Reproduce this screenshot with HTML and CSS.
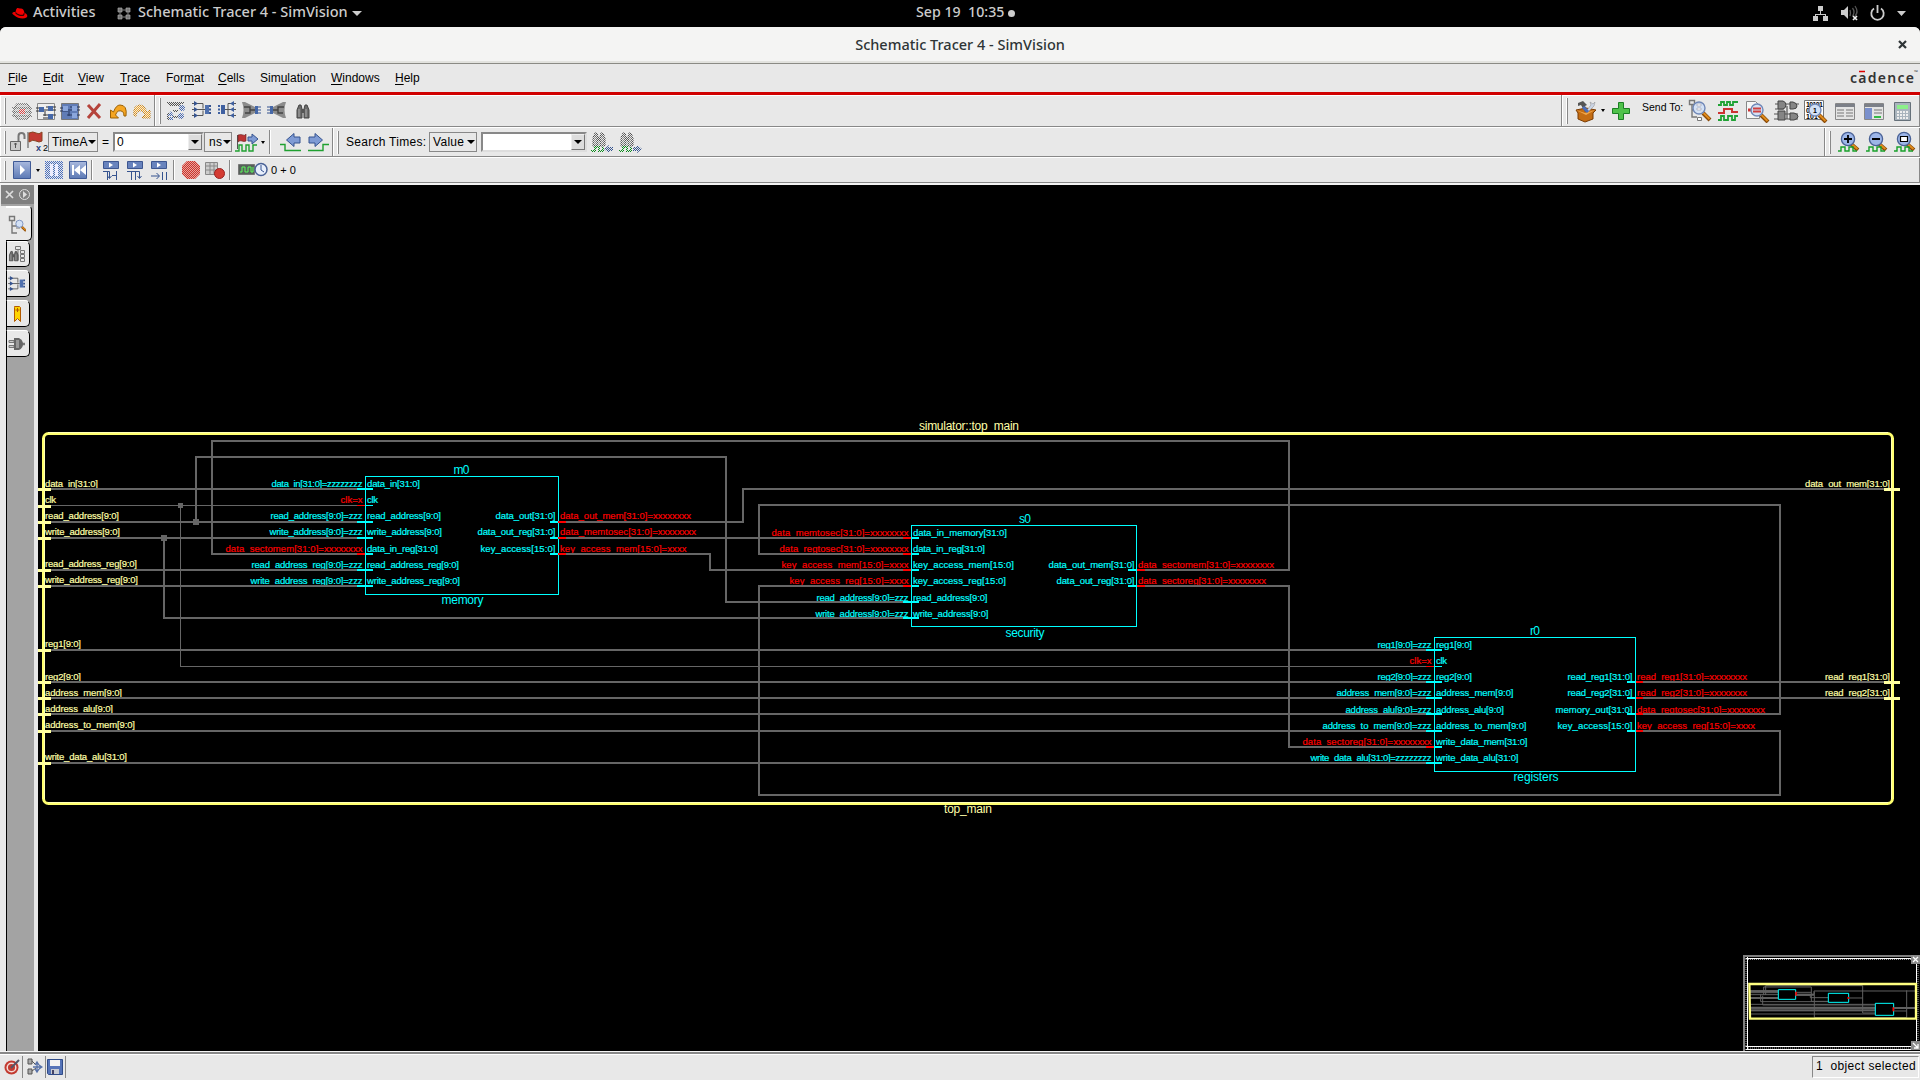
FILE: index.html
```html
<!DOCTYPE html>
<html lang="en">
<head>
<meta charset="utf-8">
<title>Schematic Tracer 4 - SimVision</title>
<link rel="stylesheet" href="styles.css">
</head>
<body>
<svg class="defs" width="0" height="0">
  <defs>
    <pattern id="checks" width="2" height="2" patternUnits="userSpaceOnUse"><path d="M0 0h1v1H0zM1 1h1v1H1z" fill="#fff"/></pattern>
    <mask id="dither" maskUnits="userSpaceOnUse" x="0" y="0" width="30" height="30"><rect width="30" height="30" fill="url(#checks)"/></mask>
    <linearGradient id="blue" x2="0" y2="1"><stop stop-color="#a9b9de"/><stop offset="1" stop-color="#5d7ab5"/></linearGradient>
    <g id="lens"><path d="M13 13l7 7" stroke="#8a4a08" stroke-width="4"/><path d="M13.5 13l6 6" stroke="#e08c1c" stroke-width="2"/><circle cx="9" cy="8" r="6" fill="#d3e1f5" stroke="#7088b8" stroke-width="1.4"/></g>
    <g id="zoomlens"><path d="M14 13l7 6" stroke="#8a4a08" stroke-width="4"/><path d="M14.5 13l6 5" stroke="#e08c1c" stroke-width="2"/><path d="M1 20h3v-4h4v4h4v-4h4v4h4" fill="none" stroke="#17a02a" stroke-width="1.4"/><circle cx="11" cy="8" r="6.6" fill="#9db6e8" stroke="#4a6296" stroke-width="1.3"/></g>
    <g id="binoc"><path d="M2 7l2-5h2l1 4v9H2zM9 6l1-4h2l2 5v8H9z" fill="#6c6c6c" stroke="#444" stroke-width="1"/><path d="M7 6h2v4H7z" fill="#555"/><path d="M4 6v8M11 6v8" stroke="#aaa"/></g>
    <g id="step"><path d="M1.500.500h15v7h-15z" fill="#6883bd" stroke="#3d5690"/><path d="M7 1.500v5L11 4z" fill="#fff"/></g>
    <g id="connect"><path d="M0 2.500h11v5M0 8.500h13M0 14.500h11v-5" fill="none" stroke="#555"/><path d="M2 0l4 2.500L2 5zM2 6l4 2.500L2 11zM2 12l4 2.500L2 17z" fill="#35538f"/><path d="M13 4h4v9h-4z" fill="#4f70ae"/><path d="M17 4h2v2h-2zM17 7.500h2v2h-2zM17 11h2v2h-2z" fill="#35538f"/></g>
    <g id="tree"><path d="M.500.500h5v4h-5zM3 5v12h5M3 10h5" fill="none" stroke="#777" stroke-width="1.400"/></g>
  </defs>
</svg>

<header class="topbar">
  <svg class="hat" width="16" height="13" viewBox="0 0 16 13"><path d="M4 3c1-3 2-2 4-1.500 2-.5 4 .5 4.500 4.500 3 1 3.500 3.500 2 4.500-3 2-9 1-12-2C-1 6.500 0 5 3.500 5z" fill="#e00"/><path d="M3.500 5.500c1 2 5 3.500 8 2.700l.8-2" fill="none" stroke="#300" stroke-width="1.200"/></svg>
  <span class="activities">Activities</span>
  <svg class="appicon" width="15" height="13" viewBox="0 0 15 13"><path d="M1 1h4v4H1zM9 1h4v4H9zM1 8h4v4H1zM9 8h4v4H9z" fill="#777" stroke="#aaa" stroke-width=".7"/><path d="M5 3h4M5 10h4M3 5v3M11 5v3" stroke="#888"/></svg>
  <span class="appname">Schematic Tracer 4 - SimVision</span>
  <svg class="topcaret" width="10" height="5"><path d="M0 0h10L5 5z" fill="#ccc"/></svg>
  <span class="clock">Sep 19&nbsp; 10:35</span><i class="dot"></i>
  <svg class="tray" width="94" height="16" viewBox="0 0 94 16">
    <g fill="#ccc"><path d="M5 1h5v5H5zM0 11h5v5H0zM10 11h5v5h-5z"/><path d="M7 6h1v3h5v2h-1v-1H3v1H2V9h5z"/><path d="M28 5h3l4-4v13l-4-4h-3zM84 6h9l-4.500 5z"/></g>
    <path d="M37 5q1 3 0 6M39.500 3q3 4 0 8M42 1q4 6 0 10" fill="none" stroke="#555" stroke-width="1.300"/><path d="M40 11l4 4M44 11l-4 4" stroke="#eee" stroke-width="1.700"/>
    <path d="M61 3.500a6.200 6.200 0 1 0 7 0M64.500 0v8" fill="none" stroke="#ccc" stroke-width="1.800"/>
  </svg>
</header>

<main class="window">
  <div class="titlebar"><span class="title">Schematic Tracer 4 - SimVision</span>
    <svg class="close" width="9" height="9"><path d="M1 1l7 7M8 1L1 8" stroke="#2e3436" stroke-width="2.200"/></svg></div>

  <nav class="menubar">
    <div class="menus"><span><u>F</u>ile</span><span><u>E</u>dit</span><span><u>V</u>iew</span><span><u>T</u>race</span><span>For<u>m</u>at</span><span><u>C</u>ells</span><span>Sim<u>u</u>lation</span><span><u>W</u>indows</span><span><u>H</u>elp</span></div>
    <svg class="brand" width="70" height="20"><text x="0" y="15" textLength="64">cadence</text><path d="M9 3.500h6" stroke="#d00" stroke-width="1.500"/><text class="tm" x="64" y="6">™</text></svg>
  </nav>

  <div class="toolbar row1">
    <div class="group g-edit"><i class="handle"></i>
      <svg class="btn" viewBox="0 0 24 24"><g mask="url(#dither)"><path d="M7 5h10l3 4v7l-3 4H7l-3-4V9zM2 9h20M2 13h20M2 17h20" fill="#bbb" stroke="#666" stroke-width="1.500"/><path d="M9 10h6v5H9z" fill="#d44"/></g></svg>
      <svg class="btn" viewBox="0 0 24 24"><path d="M3.500 4.500h17v16h-17z" fill="#eee" stroke="#888"/><path d="M2 9h8M2 12h8M12 8h10M12 11h10M9 16h13M9 19h5M11 10v7" stroke="#333" fill="none"/><path d="M5 8h5v5H5zM14 7h5v5h-5zM14 15h5v5h-5z" fill="#4668a8"/></svg>
      <svg class="btn" viewBox="0 0 24 24"><path d="M3.500 4.500h17v16h-17z" fill="#607cb6" stroke="#777"/><path d="M2 9h8M2 12h8M12 8h10M12 11h10M9 16h13M11 10v7" stroke="#26375e" fill="none"/><path d="M5 7h5v5H5zM14 7h5v5h-5zM14 14h5v5h-5z" fill="#8aa6dc"/></svg>
      <svg class="btn" viewBox="0 0 24 24"><path d="M6 6l12 13M18 5L6 19" stroke="#b5443c" stroke-width="3"/></svg>
      <svg class="btn" viewBox="0 0 24 24"><path d="M4.500 11v8h8l-3-3q2-6 7-3.500 1.500 1 1.500 4.500h2q1.500-11-6-11-4 0-6.500 7z" fill="#f5a623" stroke="#9c6206"/></svg>
      <svg class="btn" viewBox="0 0 24 24"><g mask="url(#dither)"><path d="M20 11v8h-8l3-3q-2-6-7-3.500Q6 13 6 17H4Q2.500 6 10 6q4 0 7 7z" fill="#f5a623" stroke="#c07808"/></g></svg>
    </div>
    <div class="group g-trace"><i class="handle"></i>
      <svg class="btn wide" viewBox="0 0 25 24"><g mask="url(#dither)"><path d="M3 4h17M5 6h12M4 14v7M9 12h5M9 18h5" stroke="#222" stroke-width="1.500"/><circle cx="18" cy="9" r="3" fill="#4466b0"/><circle cx="17" cy="17" r="3" fill="#4466b0"/><path d="M3 17l4-5 3 5zM5 18h4v3H5z" fill="#4466b0"/></g></svg>
      <svg class="btn wide" viewBox="0 0 25 24"><use href="#connect" x="3" y="2"/></svg>
      <svg class="btn wide" viewBox="0 0 25 24"><path d="M22 4.500h-8v12h8M9 10.500h13" fill="none" stroke="#555"/><path d="M20 2l-4 2.500L20 7zM20 8l-4 2.500 4 2.500zM20 14l-4 2.500 4 2.500zM7 6h4v9H7zM4 6h2v2H4zM4 9.500h2v2H4zM4 13h2v2H4z" fill="#3f60a0"/></svg>
      <svg class="btn wide" viewBox="0 0 25 24"><path d="M3 3h3l10 5v6L6 19H3q3-8 0-16z" fill="#8c8c8c"/><path d="M5 8h6v3h7M6 14h5v-3" fill="none" stroke="#444" stroke-width="1.400"/><path d="M16 7h3v8h-3z" fill="#4668a8"/><path d="M19 8h3M19 11h3M19 14h3" stroke="#35538f"/></svg>
      <svg class="btn wide" viewBox="0 0 25 24"><path d="M22 3h-3L9 8v6l10 5h3q-3-8 0-16z" fill="#8c8c8c"/><path d="M20 8h-6v3H7M19 14h-5v-3" fill="none" stroke="#444" stroke-width="1.400"/><path d="M6 7h3v8H6z" fill="#4668a8"/><path d="M3 8h3M3 11h3M3 14h3" stroke="#35538f"/></svg>
      <svg class="btn wide" viewBox="0 0 25 24"><use href="#binoc" x="6" y="4"/></svg>
    </div>
    <div class="group g-send"><i class="handle"></i>
      <svg class="btn" viewBox="0 0 24 24"><path d="M2 11l10-2 10 2-3 3v6l-8 3-7-3v-6z" fill="#c46d14" stroke="#7b3d05"/><path d="M2 11l9 3 10-3-9 5z" fill="#f0a64a"/><path d="M4 4l5-2 4 4-2 1 3 5-3 1-4-7-3 1z" fill="#555"/><path d="M12 12l5-6-1-3 3 2 2-2-1 4-6 6z" fill="#ccd5e5" stroke="#888" stroke-width=".5"/><path d="M9 8l5 5" stroke="#4d6fbb" stroke-width="3"/></svg>
      <i class="caret"></i>
      <svg class="btn plus" viewBox="0 0 24 24"><path d="M9.500 3.500h5v6h6v5h-6v6h-5v-6h-6v-5h6z" fill="#4fc24b" stroke="#1b7f24"/></svg>
      <span class="sendto">Send To:</span>
      <svg class="btn send first" viewBox="0 0 29 24"><use href="#tree" x="4" y="1"/><path d="M12.500 18.500h4v3h-4z" fill="#fff" stroke="#777"/><use href="#lens" x="5" y="1"/><path d="M12 5h4v2h-4zM12 9h4v2h-4z" fill="#fff" stroke="#99a" stroke-width=".6"/></svg>
      <svg class="btn send" viewBox="0 0 29 24"><path d="M4 6h3V3h3v3h3V3h3v3h3V3h5M4 21h3v-4h3v4h4v-4h4v4h3v-4h3" fill="none" stroke="#21a336" stroke-width="1.800"/><path d="M4 14h6v-4h8v3h6" fill="none" stroke="#c33" stroke-width="2"/></svg>
      <svg class="btn send" viewBox="0 0 29 24"><path d="M3.500 2.500h9l4 4v13h-13z" fill="#f6f6f6" stroke="#888"/><path d="M5 11h9" stroke="#c33" stroke-width="3"/><use href="#lens" x="5" y="3"/><path d="M10 9.500h8M10 12.500h8" stroke="#d04040" stroke-width="2"/></svg>
      <svg class="btn send" viewBox="0 0 29 24"><path d="M3 5h24M3 10h9M2 15h24M2 20h24M15 7v13" stroke="#555" stroke-width="1.200"/><path d="M6 2h5q3 1 3 4t-3 4H6zM18 3h3q4 1 4 4t-4 3h-3zM6 12h7v9H6zM18 14h4q4 1 4 3.500t-4 3.500h-4z" fill="#858585" stroke="#444"/></svg>
      <svg class="btn send" viewBox="0 0 29 24"><path d="M3.500 1.500h19v19h-19z" fill="#fff" stroke="#777"/><text class="bits" x="5" y="8" textLength="17">10101</text><text class="bits" x="5" y="14">0</text><text class="bits" x="5" y="20" textLength="12">101</text><use href="#lens" x="5" y="3"/><text class="bits" x="12" y="14">1</text></svg>
      <svg class="btn send" viewBox="0 0 29 24"><path d="M5.500 4.500h19v16h-19z" fill="#e4e4e4" stroke="#888"/><path d="M5 5h20v3H5z" fill="#7c8088"/><path d="M7 11h7M7 14h7M7 17h7M16 11h7M16 14h7M16 17h7" stroke="#777"/></svg>
      <svg class="btn send" viewBox="0 0 29 24"><path d="M5.500 4.500h19v16h-19z" fill="#e4e4e4" stroke="#888"/><path d="M5 5h20v3H5z" fill="#7c8088"/><path d="M6 9h7v11H6z" fill="#7a90cc"/><path d="M15 11h8M15 14h8" stroke="#777"/><path d="M15 18h7" stroke="#3b4" stroke-width="2"/></svg>
      <svg class="btn send" viewBox="0 0 29 24"><path d="M6.500 3.500h16v18h-16z" fill="#a9b4bd" stroke="#66717a"/><path d="M9 6h11v4H9z" fill="#8cf08a"/><path d="M9 13h11M9 16h11M9 19h11" stroke="#eee" stroke-width="2" stroke-dasharray="2 1"/></svg>
    </div>
  </div>

  <div class="toolbar row2">
    <div class="group g-time"><i class="handle"></i>
      <svg class="lockflag" width="38" height="24" viewBox="0 0 38 24"><path d="M.500 11.500h10v9h-10z" fill="#ccc" stroke="#666"/><path d="M8.500 11V6q0-3 3-3t3 3v3" fill="none" stroke="#777" stroke-width="2"/><path d="M5.500 13v5M4 14h3" stroke="#555"/><path d="M18 2v16" stroke="#999" stroke-width="2"/><path d="M19 3q4-2 7 0t6-1v9q-3 2-6 0t-7 1z" fill="#c23a33" stroke="#842"/><text class="xmark" x="26" y="21">x</text><text class="two" x="33" y="21">2</text></svg>
      <span class="select timea">TimeA<i class="caret"></i></span><span class="eq">=</span>
      <span class="entry timeval">0<b><i class="caret"></i></b></span><span class="select unit">ns<i class="caret"></i></span>
      <svg class="flagwave" width="24" height="24" viewBox="0 0 24 24"><path d="M2.500 5v14" stroke="#555"/><path d="M3 5q3-1 5 0t3-1v7q-2 1-4 0t-4 1z" fill="#b33" stroke="#622" stroke-width=".6"/><path d="M13 7h4V4l6 5-6 5v-3h-4z" fill="#7f9bd4" stroke="#35538f"/><path d="M0 21h4v-6h3v6h4v-6h3v6h4v-6h4" fill="none" stroke="#1fa030" stroke-width="1.400"/></svg>
      <i class="caret c2"></i><i class="sep"></i>
      <svg class="arrow left" width="21" height="20" viewBox="0 0 21 20"><path d="M0 12.500h5v6h16" fill="none" stroke="#1fa030" stroke-width="1.400"/><path d="M20 5h-6V1.500L6.500 8l7.500 6.500V11h6z" fill="#7f9bd4" stroke="#35538f"/></svg>
      <svg class="arrow" width="21" height="20" viewBox="0 0 21 20"><path d="M0 18.500h15v-6h6" fill="none" stroke="#1fa030" stroke-width="1.400"/><path d="M1 5h6V1.500L14.500 8 7 14.500V11H1z" fill="#7f9bd4" stroke="#35538f"/></svg>
    </div>
    <div class="group g-search"><i class="handle"></i>
      <span class="searchlabel">Search Times:</span><span class="select value">Value<i class="caret"></i></span>
      <span class="entry find"><b><i class="caret"></i></b></span>
      <svg class="finder" width="24" height="24" viewBox="0 0 24 24"><g mask="url(#dither)"><use href="#binoc" y="1"/><path d="M0 21h4v-4h4v4h4v-4" fill="none" stroke="#0a8a1a" stroke-width="2"/><path d="M13 19l5-4v8z" fill="#35538f"/><path d="M18 17h4v4h-4z" fill="#35538f"/></g></svg>
      <svg class="finder" width="24" height="24" viewBox="0 0 24 24"><g mask="url(#dither)"><use href="#binoc" y="1"/><path d="M0 21h4v-4h4v4h4v-4" fill="none" stroke="#0a8a1a" stroke-width="2"/><path d="M23 19l-5-4v8z" fill="#35538f"/><path d="M14 17h4v4h-4z" fill="#35538f"/></g></svg>
    </div>
    <div class="group g-zoom"><i class="handle"></i>
      <svg class="zoom" width="28" height="22" viewBox="0 0 28 22"><use href="#zoomlens" x="2"/><path d="M9 8h8M13 4v8" stroke="#000" stroke-width="1.800"/></svg>
      <svg class="zoom" width="28" height="22" viewBox="0 0 28 22"><use href="#zoomlens" x="2"/><path d="M9 8h8" stroke="#000" stroke-width="2"/></svg>
      <svg class="zoom" width="28" height="22" viewBox="0 0 28 22"><use href="#zoomlens" x="2"/><path d="M9.500 5.500h7v5h-7z" fill="#fff" stroke="#000" stroke-width="1.200"/></svg>
    </div>
  </div>

  <div class="toolbar row3">
    <div class="group g-run"><i class="handle"></i>
      <svg class="btn" viewBox="0 0 24 24"><path d="M3.500 3.500h17v17h-17z" fill="url(#blue)" stroke="#3f5a96"/><path d="M10 7v10l5-5z" fill="#fff"/></svg>
      <i class="caret run"></i>
      <svg class="btn" viewBox="0 0 24 24"><g mask="url(#dither)"><path d="M3 3h18v18H3z" fill="#4a6fc0"/></g><path d="M8 6h3v12H8zM13 6h3v12h-3z" fill="#eef"/></svg>
      <svg class="btn" viewBox="0 0 24 24"><path d="M3.500 3.500h17v17h-17z" fill="url(#blue)" stroke="#3f5a96"/><path d="M6 7h2v10H6zM14 7v10l-6-5zM20 7v10l-6-5z" fill="#fff"/></svg>
      <i class="sep s1"></i>
      <svg class="btn s2" viewBox="0 0 24 24"><use href="#step" x="3" y="3"/><path d="M4 13.500h6.500V20M8.500 18l2 2.500 2-2.500M8.500 14v8M17.500 13v9M17 17.500h-4" fill="none" stroke="#35538f"/></svg>
      <svg class="btn" viewBox="0 0 24 24"><use href="#step" x="3" y="3"/><path d="M4 13.500h12.500V20M14.500 18l2 2.500 2-2.500M8.500 14v8M12.500 14v8" fill="none" stroke="#35538f"/></svg>
      <svg class="btn" viewBox="0 0 24 24"><use href="#step" x="3" y="3"/><path d="M4 18h8M9.500 15l3 3-3 3M15.500 14v8M19.500 14v8" fill="none" stroke="#35538f"/></svg>
      <i class="sep s3"></i>
      <svg class="btn s4" viewBox="0 0 24 24"><path d="M8 3h8l5 5v8l-5 5H8l-5-5V8z" fill="#e9a29d"/><g mask="url(#dither)"><path d="M8 3h8l5 5v8l-5 5H8l-5-5V8z" fill="#c9352b"/></g></svg>
      <svg class="btn" viewBox="0 0 24 24"><path d="M2.500 4.500h12v12h-12zM2 8h13M2 12h13M7 5v12M11 5v12" fill="#ccc" stroke="#888"/><circle cx="16.500" cy="15.500" r="5" fill="#d43c33" stroke="#922"/></svg>
      <i class="sep s5"></i>
      <svg class="simtime" width="30" height="16" viewBox="0 0 30 16"><path d="M.500 2.500h16v10H.500z" fill="#57605a" stroke="#777"/><path d="M2 10h2V5h3v5h3V5h3v5h2V5" fill="none" stroke="#5dfa5d"/><circle cx="23" cy="7.500" r="6" fill="#e8effc" stroke="#4a6296" stroke-width="1.500"/><path d="M23 3v5l3 2" fill="none" stroke="#35538f"/></svg>
      <span class="delta">0 + 0</span>
    </div>
  </div>

  <section class="workspace">
    <aside class="sidebar">
      <div class="sidehead"><svg width="33" height="19"><path d="M5 6l7 7M12 6l-7 7" stroke="#ddd" stroke-width="1.700"/><circle cx="23.500" cy="9.500" r="5" fill="none" stroke="#ddd"/><path d="M22 6v7l4-3.500z" fill="#ddd"/></svg></div>
      <div class="tabs">
        <div class="tab active"><svg width="18" height="20" viewBox="0 0 18 20"><use href="#tree" x="1" y="2"/><path d="M8 8h4M8 14h4" stroke="#777"/><g transform="translate(6 5) scale(.6)"><use href="#lens"/></g></svg></div>
        <div class="tab second"><svg width="18" height="18" viewBox="0 0 18 18"><path d="M7.500 1.500h5v3h-5zM12.500 5.500h4v3h-4zM12.500 9.500h4v3h-4zM12.500 13.500h4v3h-4zM10 5v10" fill="none" stroke="#777"/><g transform="translate(0 5) scale(.72)"><use href="#binoc"/></g></svg></div>
        <div class="tab"><svg width="18" height="16" viewBox="0 0 20 18"><use href="#connect"/></svg></div>
        <div class="tab"><svg width="18" height="18" viewBox="0 0 18 18"><path d="M6.500 1.500h5l1 1v14l-3-3-3 3v-14z" fill="#ffd500" stroke="#b25a00"/><path d="M9.500 3v4M7.500 5h4" stroke="#b25a00"/></svg></div>
        <div class="tab"><svg width="18" height="18" viewBox="0 0 18 18"><path d="M1 5.500h5v2H1zM1 10.500h5v2H1z" fill="#ccc" stroke="#777"/><path d="M14 9h3" stroke="#777" stroke-width="2.500"/><path d="M6 3h5q4 2 4 6t-4 6H6z" fill="#666"/><path d="M8 5h3v8H8z" fill="#999"/></svg></div>
      </div>
    </aside>
    <div class="canvas">
      <svg class="schematic" width="1882" height="866" viewBox="38 185 1882 866">
        <g class="names">
          <g class="top"><text x="919" y="430" textLength="100">simulator::top_main</text><text x="944" y="813" textLength="48">top_main</text></g>
          <g class="cell"><text x="453.500" y="474" textLength="16">m0</text><text x="441.500" y="604" textLength="42">memory</text><text x="1019" y="523" textLength="12">s0</text><text x="1005.500" y="637" textLength="39">security</text><text x="1530" y="635" textLength="10">r0</text><text x="1513.500" y="780.500" textLength="45">registers</text></g>
        </g>
        <g class="port top">
          <text x="45" y="487" textLength="53">data_in[31:0]</text><text x="45" y="503" textLength="11">clk</text><text x="45" y="519" textLength="74">read_address[9:0]</text><text x="45" y="535" textLength="75">write_address[9:0]</text><text x="45" y="567" textLength="92">read_address_reg[9:0]</text><text x="45" y="583" textLength="93">write_address_reg[9:0]</text><text x="45" y="647" textLength="36">reg1[9:0]</text><text x="45" y="680" textLength="36">reg2[9:0]</text><text x="45" y="696" textLength="77">address_mem[9:0]</text><text x="45" y="712" textLength="68">address_alu[9:0]</text><text x="45" y="728" textLength="90">address_to_mem[9:0]</text><text x="45" y="760" textLength="82">write_data_alu[31:0]</text>
          <text class="r" x="1890" y="487" textLength="85">data_out_mem[31:0]</text><text class="r" x="1890" y="680" textLength="65">read_reg1[31:0]</text><text class="r" x="1890" y="696" textLength="65">read_reg2[31:0]</text>
        </g>
        <g class="port cell">
          <text x="367" y="487" textLength="53">data_in[31:0]</text><text x="367" y="503" textLength="11">clk</text><text x="367" y="519" textLength="74">read_address[9:0]</text><text x="367" y="535" textLength="75">write_address[9:0]</text><text x="367" y="552" textLength="71">data_in_reg[31:0]</text><text x="367" y="568" textLength="92">read_address_reg[9:0]</text><text x="367" y="584" textLength="93">write_address_reg[9:0]</text>
          <text class="r" x="362.500" y="487" textLength="91">data_in[31:0]=zzzzzzzz</text><text class="r" x="362.500" y="519" textLength="92">read_address[9:0]=zzz</text><text class="r" x="362.500" y="535" textLength="93">write_address[9:0]=zzz</text><text class="r" x="362.500" y="568" textLength="111">read_address_reg[9:0]=zzz</text><text class="r" x="362.500" y="584" textLength="112">write_address_reg[9:0]=zzz</text>
          <text class="r" x="555.500" y="519" textLength="60">data_out[31:0]</text><text class="r" x="555.500" y="535" textLength="78">data_out_reg[31:0]</text><text class="r" x="555.500" y="552" textLength="75">key_access[15:0]</text>
          <text x="913" y="536" textLength="94">data_in_memory[31:0]</text><text x="913" y="552" textLength="72">data_in_reg[31:0]</text><text x="913" y="568" textLength="101">key_access_mem[15:0]</text><text x="913" y="584" textLength="93">key_access_reg[15:0]</text><text x="913" y="601" textLength="74.500">read_address[9:0]</text><text x="913" y="617" textLength="75.500">write_address[9:0]</text>
          <text class="r" x="908.500" y="601" textLength="92">read_address[9:0]=zzz</text><text class="r" x="908.500" y="617" textLength="93">write_address[9:0]=zzz</text>
          <text class="r" x="1134.500" y="568" textLength="86">data_out_mem[31:0]</text><text class="r" x="1134.500" y="584" textLength="78">data_out_reg[31:0]</text>
          <text x="1436" y="648" textLength="36">reg1[9:0]</text><text x="1436" y="664" textLength="11">clk</text><text x="1436" y="680" textLength="36">reg2[9:0]</text><text x="1436" y="696" textLength="77.500">address_mem[9:0]</text><text x="1436" y="713" textLength="68">address_alu[9:0]</text><text x="1436" y="729" textLength="90.500">address_to_mem[9:0]</text><text x="1436" y="745" textLength="91.500">write_data_mem[31:0]</text><text x="1436" y="761" textLength="82.500">write_data_alu[31:0]</text>
          <text class="r" x="1431.500" y="648" textLength="54">reg1[9:0]=zzz</text><text class="r" x="1431.500" y="680" textLength="54">reg2[9:0]=zzz</text><text class="r" x="1431.500" y="696" textLength="95">address_mem[9:0]=zzz</text><text class="r" x="1431.500" y="713" textLength="86">address_alu[9:0]=zzz</text><text class="r" x="1431.500" y="729" textLength="109">address_to_mem[9:0]=zzz</text><text class="r" x="1431.500" y="761" textLength="121">write_data_alu[31:0]=zzzzzzzz</text>
          <text class="r" x="1632.500" y="680" textLength="65">read_reg1[31:0]</text><text class="r" x="1632.500" y="696" textLength="65">read_reg2[31:0]</text><text class="r" x="1632.500" y="713" textLength="77">memory_out[31:0]</text><text class="r" x="1632.500" y="729" textLength="75">key_access[15:0]</text>
        </g>
        <g class="port unknown">
          <text class="r" x="362.500" y="503" textLength="22">clk=x</text><text class="r" x="362.500" y="552" textLength="137">data_sectomem[31:0]=xxxxxxxx</text>
          <text x="560" y="519" textLength="131">data_out_mem[31:0]=xxxxxxxx</text><text x="560" y="535" textLength="136">data_memtosec[31:0]=xxxxxxxx</text><text x="560" y="552" textLength="126.500">key_access_mem[15:0]=xxxx</text>
          <text class="r" x="908.500" y="536" textLength="137">data_memtosec[31:0]=xxxxxxxx</text><text class="r" x="908.500" y="552" textLength="129">data_regtosec[31:0]=xxxxxxxx</text><text class="r" x="908.500" y="568" textLength="127">key_access_mem[15:0]=xxxx</text><text class="r" x="908.500" y="584" textLength="119">key_access_reg[15:0]=xxxx</text>
          <text x="1138" y="568" textLength="136">data_sectomem[31:0]=xxxxxxxx</text><text x="1138" y="584" textLength="128">data_sectoreg[31:0]=xxxxxxxx</text>
          <text class="r" x="1431.500" y="664" textLength="22">clk=x</text><text class="r" x="1431.500" y="745" textLength="129">data_sectoreg[31:0]=xxxxxxxx</text>
          <text x="1637" y="680" textLength="110">read_reg1[31:0]=xxxxxxxx</text><text x="1637" y="696" textLength="110">read_reg2[31:0]=xxxxxxxx</text><text x="1637" y="713" textLength="128">data_regtosec[31:0]=xxxxxxxx</text><text x="1637" y="729" textLength="118">key_access_reg[15:0]=xxxx</text>
        </g>
        <path class="wire" d="M51 489H357M51 522H357M51 538H357M51 570H357M51 586H357M51 650H1426M51 682H1426M51 698H1426M51 714H1426M51 731H1426M51 763H1426M357 554H212V441H1289V570H1145M196 522V457H726V602H903M164 538V618H903M566 522H743V489H1884M566 538H903M566 554H710V570H903M903 554H759V505H1780V714H1643M903 586H759V795H1780V731H1643M1145 586H1289V747H1426M1643 682H1884M1643 698H1884"/>
        <path class="wire thin" d="M51 505.500H357M180.500 505.500V666.500H1426"/>
        <path class="junction" d="M178 503h5v5h-5zM193 519h6v6h-6zM161 535h6v6h-6z"/>
        <g class="frame"><rect x="43.500" y="433.500" width="1849" height="370" rx="5"/><path class="framehi" d="M48 432.500H1888M48 802.500H1888M44.500 438V799M1891.500 438V799"/></g>
        <path class="pin top" d="M38 489.500H51M38 506H51M38 522.500H51M38 538.500H51M38 570.500H51M38 586.500H51M38 650.500H51M38 682.500H51M38 698.500H51M38 714.500H51M38 731.500H51M38 763.500H51M1884 489.500H1900M1884 682.500H1900M1884 698.500H1900"/>
        <path class="block" d="M365.500 476.500h193v118h-193zM911.500 525.500h225v101h-225zM1434.500 637.500h201v134h-201z"/>
        <path class="pin cell" d="M357 489h16M357 522h16M357 538h16M366 554h7M357 570h16M357 586h16M550 522h8M550 538h8M550 554h8M912 538h7M912 554h7M912 570h7M912 586h7M903 602h16M903 618h16M1128 570h8M1128 586h8M1426 650h16M1426 682h16M1426 698h16M1426 714h16M1426 731h16M1435 747h7M1426 763h16M1627 682h8M1627 698h8M1627 714h8M1627 731h8"/>
        <path class="pin cell thin" d="M366 505.500h7M1435 666.500h7"/>
        <path class="pin unknown" d="M357 554h8M558 522h8M558 538h8M558 554h8M903 538h8M903 554h8M903 570h8M903 586h8M1137 570h8M1137 586h8M1426 747h8M1636 682h7M1636 698h7M1636 714h7M1636 731h7"/>
        <path class="pin unknown thin" d="M357 505.500h8M1426 666.500h8"/>
      </svg>
      <svg class="overview" width="177" height="96" viewBox="0 0 177 96">
        <path d="M0 0h177v96H0z"/><path d="M1 96V1h176" fill="none" stroke="#808080" stroke-width="2"/>
        <path d="M2.500 3.500H170M2.500 94.500H170M4.500 2v92M2.500 91.500H168M173.500 8v80" fill="none" stroke="#fff"/>
        <path d="M5 4.500H168M5 93H168M3 4v88M175 8v80" fill="none" stroke="#999" stroke-dasharray="1 1"/>
        <g transform="translate(-23 -15) scale(.33333)" fill="none" stroke="#606060" stroke-width="3">
          <path d="M90 152h84M90 158h84M90 164h84M90 173h84M230 163h52v-10h304M228 166h43v7h53M230 157h44M131 165v-24h143v43h50M137 165v-28h291v82h38M122 163v22h202M128 167v28h338M90 205h376M90 212h376M90 222h376M90 193h376M388 174h40M283 155v78h277v-82M523 204h62M523 213h37"/><path d="M90 203h376M90 211h376M90 154h84M90 174h84M230 164h52M523 204h62" stroke-width="6"/>
          <path d="M88 132h500v104H90z" stroke="#ffff80" stroke-width="7"/>
          <path d="M175 149h52v29h-52zM325 160h61v27h-61zM466 190h55v36h-55z" fill="#000" stroke="#0ff"/><path d="M228 155v12M385 171v6M520 202v12" stroke="red" stroke-width="5"/>
        </g>
        <path d="M168 0h9v9h-9zM168 86h9v9h-9z" fill="#8a8a8a"/><path d="M170 2l5 5M175 2l-5 5M170 88l5 5M175 89v4h-4" fill="none" stroke="#fff" stroke-width="1.300"/>
      </svg>
    </div>
  </section>

  <footer class="statusbar">
    <div class="cellbox"><svg width="18" height="18" viewBox="0 0 18 18"><circle cx="8.500" cy="9.500" r="7" fill="#c23a30"/><circle cx="8.500" cy="9.500" r="4.300" fill="none" stroke="#f4dcd8" stroke-width="1.500"/><path d="M8 10l8-8" stroke="#556" stroke-width="2"/></svg></div>
    <div class="cellbox"><svg width="18" height="18" viewBox="0 0 18 18"><path d="M3 1h4v5H3zM3 11h4v5H3z" fill="#aaa" stroke="#555"/><path d="M7 3l4 4M7 13l4-3" stroke="#555"/><path d="M8 9h8M12 5v8M10 7l2-3 2 3M10 11l2 3 2-3M14 7l3 2-3 2" fill="none" stroke="#5570a8" stroke-width="1.300"/></svg></div>
    <div class="cellbox save"><svg width="18" height="18" viewBox="0 0 18 18"><path d="M1.500 1.500h15v15h-14l-1-1z" fill="#5674b8" stroke="#304b88"/><path d="M4 2h10v6H4z" fill="#f2f2f2"/><path d="M5 11h8v5H5z" fill="#c8ccd4"/><path d="M6 12h2v4H6z" fill="#446"/></svg></div>
    <div class="message">1&nbsp; object selected</div>
  </footer>
</main>
</body>
</html>
```
FILE: styles.css
```css
* { box-sizing: border-box; }
body { margin: 0; background: #000; font-family: "Liberation Sans", Arial, sans-serif; font-size: 12px; color: #000; overflow: hidden; }
svg { display: block; flex: none; }
.defs { position: absolute; }
i, b { font-style: normal; font-weight: normal; display: block; flex: none; }

.topbar { height: 27px; display: flex; align-items: center; padding-bottom: 1px; color: #ccc; font: 500 14.5px/23px "Noto Sans", sans-serif; white-space: nowrap; }
.topbar span { padding-bottom: 3px; }
.hat { margin-left: 12px; }
.activities { width: 62px; margin-left: 5px; }
.appicon { margin-left: 22px; }
.appname { width: 209px; margin-left: 6px; }
.topcaret { margin-left: 5px; }
.clock { width: 88px; margin-left: 554px; font-size: 14.2px; }
.dot { width: 7px; height: 7px; border-radius: 50%; background: #ccc; margin-left: 4px; }
.tray { margin-left: auto; margin-right: 13px; }

.window { height: 1053px; display: flex; flex-direction: column; background: #e8e8e8; border-radius: 6px 6px 0 0; }
.titlebar { height: 37px; flex: none; display: flex; align-items: center; justify-content: center; padding-bottom: 2px; position: relative; background: #f4f4f3; border-bottom: 1px solid #8a8a84; border-radius: 6px 6px 0 0; color: #2e3436; font: 500 14.5px/34px "Noto Sans", sans-serif; box-shadow: inset 0 -2px #e2e2de; }
.close { position: absolute; right: 13px; top: 13px; }
.menubar { height: 28px; flex: none; display: flex; justify-content: space-between; align-items: center; padding: 0 0 0 8px; }
.menus { display: grid; grid-template-columns: 35px 35px 42px 46px 52px 42px 71px 64px 40px; line-height: 28px; }
.menus u { text-underline-offset: 2px; }
.brand text { font: 600 14px "Noto Sans", sans-serif; fill: #333; }
.brand .tm { font-size: 5px; }

.toolbar { flex: none; display: flex; border-bottom: 1px solid #888; }
.row1 { height: 35px; border-top: 3px solid #d00000; box-shadow: inset 0 1px #fff; }
.row2 { height: 30px; border-top: 1px solid #fff; }
.row3 { height: 26px; border-top: 1px solid #fff; }
.group { display: flex; align-items: center; border-right: 1px solid #888; border-left: 1px solid #fff; }
.handle { width: 2px; align-self: stretch; margin: 3px 4px 2px 3px; background: linear-gradient(90deg, #fff 50%, #888 50%); }
.btn { width: 24px; height: 24px; }
.btn.wide { width: 25px; }
.btn.send { width: 29px; }
.g-edit { width: 155px; }
.g-trace { flex: 1; }
.g-trace .handle { margin-right: 3px; }
.g-send { width: 358px; }
.g-send .handle { margin-right: 6px; }
.caret { width: 0; height: 0; border: 4px solid transparent; border-top: 4px solid #000; border-bottom: 0; }
.g-send > .caret { border-width: 3px 2.5px 0; margin: 0 0 0 3px; }
.plus { margin-left: 4px; }
.sendto { width: 41px; margin: 0 0 8px 9px; font-size: 10.5px; white-space: nowrap; }
.send.first { margin-left: 2px; }
.bits { font: bold 7px "Liberation Sans", sans-serif; }

.g-time { width: 333px; }
.xmark { font-size: 9px; font-weight: bold; fill: #26407c; }
.two { font-size: 9px; }
.select { height: 20px; display: flex; align-items: center; justify-content: space-between; border: 1px solid #888; padding: 0 1px 1px 4px; letter-spacing: .3px; }
.timea { width: 50px; padding-left: 3px; }
.eq { width: 7px; margin: 0 4px; }
.entry { height: 20px; display: flex; align-items: center; background: #fff; border: 2px solid #888; border-color: #888 #ddd #ddd #888; padding: 0 0 0 2px; }
.entry b { width: 14px; height: 16px; margin-left: auto; background: #ddd; border: 1px solid #eee; border-right-color: #777; border-bottom-color: #777; padding: 5px 2px; }
.timeval { width: 91px; }
.unit { width: 28px; padding-right: 0; }
.flagwave { margin-left: 3px; }
.c2 { border-width: 3px 2.5px 0; margin-left: 2px; }
.sep { width: 2px; align-self: stretch; margin: 2px 0 2px 4px; background: linear-gradient(90deg, #888 50%, #fff 50%); }
.arrow { margin-left: 7px; }
.arrow.left { margin-left: 9px; }
.g-search { flex: 1; }
.searchlabel { width: 82px; margin-left: 3px; letter-spacing: .28px; white-space: nowrap; }
.value { width: 48px; padding-left: 3px; margin-left: 1px; }
.find { width: 106px; margin-left: 4px; }
.finder { margin-left: 4px; }
.g-zoom { width: 95px; }
.g-zoom .handle { margin-right: 4px; }

.g-run { flex: 1; }
.run { border-width: 3px 2.5px 0; margin: 0 2px; }
.s1 { margin-left: 1px; }
.s2 { margin-left: 6px; }
.s3 { margin-left: 2px; }
.s4 { margin-left: 4px; }
.s5 { margin-left: 2px; }
.simtime { margin-left: 7px; }
.delta { margin-left: 3px; font-size: 11px; }

.workspace { flex: 1; display: flex; border-top: 2px solid #f4f4f4; min-height: 0; }
.sidebar { width: 33px; margin: 0 4px 0 1px; background: #a3a3a3; }
.sidehead { height: 19px; background: #808080; }
.tabs { height: 845px; margin-top: 2px; border-left: 5px solid #e8e8e8; box-shadow: inset 1px 0 #000; }
.tab { width: 24px; height: 27px; margin: 0 0 3px 0; padding-right: 2px; display: flex; align-items: center; justify-content: center; background: #e8e8e8; border: 1px solid #000; border-top-color: #fff; border-radius: 0 5px 5px 0; }
.tab.second { height: 26px; }
.tab.active { width: 26px; height: 35px; margin: 0; padding-right: 4px; border-left: 0; border-radius: 0 4px 5px 0; box-shadow: inset 0 1px #fff; }
.canvas { flex: 1; position: relative; background: #000; overflow: hidden; }
.overview { position: absolute; right: 0; bottom: 0; }

.names text { font: 12px "Liberation Sans", sans-serif; }
.port text { font: 9.5px "Liberation Sans", sans-serif; stroke-width: .2px; }
.port .r { text-anchor: end; }
.names .top, .port.top { fill: #ffffa8; }
.names .cell, .port.cell { fill: #0ff; }
.port.unknown { fill: #f00; }
.port.top { stroke: #ffffa8; }
.port.cell { stroke: #0ff; }
.port.unknown { stroke: #f00; }
.wire { fill: none; stroke: #666; stroke-width: 2; shape-rendering: crispEdges; }
.wire.thin { stroke-width: 1; }
.junction { fill: #666; shape-rendering: crispEdges; }
.frame rect { fill: none; stroke: #ffff70; stroke-width: 3; }
.framehi { stroke: #ffffb4; stroke-width: 1; }
.block { fill: none; stroke: #0ff; stroke-width: 1; shape-rendering: crispEdges; }
.pin { stroke-width: 2; shape-rendering: crispEdges; }
.pin.top { stroke: #ffffa0; stroke-width: 3; }
.pin.cell { stroke: #0ff; }
.pin.unknown { stroke: #f00; }
.pin.thin { stroke-width: 1; }

.statusbar { height: 29px; flex: none; display: flex; align-items: center; border-top: 1px solid #f4f4f4; box-shadow: inset 0 2px #888, inset 0 3px #fff; padding: 5px 1px 3px; }
.cellbox { width: 22px; height: 22px; border-right: 1px solid #888; display: flex; align-items: center; padding-left: 2px; }
.cellbox + .cellbox { width: 23px; }
.cellbox + .cellbox.save { width: 20px; padding-left: 0; }
.message { width: 107px; height: 22px; margin-left: auto; border: 1px solid #888; border-right-color: #fff; border-bottom-color: #fff; padding-left: 3px; line-height: 19px; letter-spacing: .37px; white-space: nowrap; }
```
